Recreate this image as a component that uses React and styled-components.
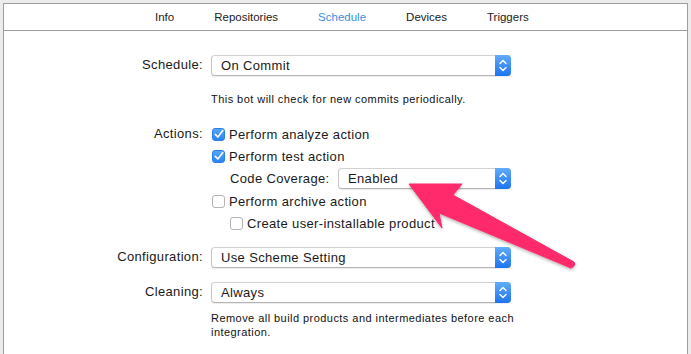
import React from 'react'
import styled, { createGlobalStyle } from 'styled-components'

const GlobalStyle = createGlobalStyle`
    html, body {
        margin: 0;
        padding: 0;
        background: #ececec;
        font-family: "Liberation Sans", Arial, sans-serif;
        color: #1a1a1a;
    }
`

const tabs = ['Info', 'Repositories', 'Schedule', 'Devices', 'Triggers']

const Chevrons = () => (
    <svg width="16" height="19" viewBox="0 0 16 19">
        <path d="M5 7.5 L8 4.5 L11 7.5" fill="none" stroke="#fff" strokeWidth="1.4" strokeLinecap="round" strokeLinejoin="round" />
        <path d="M5 11.5 L8 14.5 L11 11.5" fill="none" stroke="#fff" strokeWidth="1.4" strokeLinecap="round" strokeLinejoin="round" />
    </svg>
)

const Check = () => (
    <svg width="14" height="14" viewBox="0 0 14 14">
        <path d="M3.3 7.4 L5.9 10 L10.8 3.6" fill="none" stroke="#fff" strokeWidth="1.6" strokeLinecap="round" strokeLinejoin="round" />
    </svg>
)

const PopUp = ({ value }) => (
    <Popup>
        <PopupText>{value}</PopupText>
        <Stepper><Chevrons /></Stepper>
    </Popup>
)

const CheckItem = ({ checked, indent, children }) => (
    <CheckRow $indent={indent}>
        <Box $checked={checked}>{checked && <Check />}</Box>
        <span>{children}</span>
    </CheckRow>
)

const Arrow = () => (
    <Overlay width="691" height="354" viewBox="0 0 691 354">
        <defs>
            <filter id="sh" x="-20%" y="-20%" width="140%" height="140%">
                <feDropShadow dx="0" dy="1.5" stdDeviation="1.5" floodColor="#000" floodOpacity="0.3" />
            </filter>
        </defs>
        <path
            d="M409 184 L462 184 L453 195 L574 262 Q576 266 571 268 L439 213 L442 228 Z"
            fill="#fe2c6c"
            stroke="#fe2c6c"
            strokeWidth="1"
            strokeLinejoin="round"
            filter="url(#sh)"
        />
    </Overlay>
)

const App = () => {
    return (
        <Page>
            <GlobalStyle />
            <Panel>
                <TabBar>
                    {tabs.map(t => (
                        <Tab key={t} $active={t === 'Schedule'}>{t}</Tab>
                    ))}
                </TabBar>
                <Form>
                    <Row $top={23}>
                        <Label>Schedule:</Label>
                        <PopUp value="On Commit" />
                    </Row>
                    <Row $top={16}>
                        <span />
                        <Note>This bot will check for new commits periodically.</Note>
                    </Row>
                    <Row $top={17} $align="start">
                        <Label>Actions:</Label>
                        <Checks>
                            <CheckItem checked>Perform analyze action</CheckItem>
                            <CheckItem checked>Perform test action</CheckItem>
                            <SubRow>
                                <SubLabel>Code Coverage:</SubLabel>
                                <PopUp value="Enabled" />
                            </SubRow>
                            <CheckItem>Perform archive action</CheckItem>
                            <CheckItem indent>Create user-installable product</CheckItem>
                        </Checks>
                    </Row>
                    <Row $top={12}>
                        <Label>Configuration:</Label>
                        <PopUp value="Use Scheme Setting" />
                    </Row>
                    <Row $top={13}>
                        <Label>Cleaning:</Label>
                        <PopUp value="Always" />
                    </Row>
                    <Row $top={8}>
                        <span />
                        <Note>Remove all build products and intermediates before each integration.</Note>
                    </Row>
                </Form>
            </Panel>
            <Arrow />
        </Page>
    )
}

export default App

const Page = styled.div`
    position: relative;
    width: 691px;
    height: 354px;
    overflow: hidden;
    padding-top: 3px;
    box-sizing: border-box;
`

const Panel = styled.div`
    margin: 0 3px 0 3px;
    height: 360px;
    background: #ffffff;
    border: 1px solid #9d9d9d;
`

const TabBar = styled.div`
    display: flex;
    align-items: center;
    height: 26px;
    padding-left: 151px;
    gap: 40px;
    border-bottom: 1px solid #9d9d9d;
`

const Tab = styled.div`
    font-size: 11.5px;
    color: ${p => (p.$active ? '#3e8ee2' : '#1c1c1c')};
`

const Form = styled.div`
    display: flex;
    flex-direction: column;
`

const Row = styled.div`
    display: grid;
    grid-template-columns: 199px 300px;
    column-gap: 8px;
    align-items: ${p => p.$align || 'center'};
    margin-top: ${p => p.$top}px;
`

const Label = styled.div`
    font-size: 13px;
    letter-spacing: 0.35px;
    text-align: right;
    line-height: 22px;
`

const Note = styled.div`
    font-size: 11px;
    letter-spacing: 0.45px;
    line-height: 14px;
    color: #111;
    width: 320px;
`

const Popup = styled.div`
    display: flex;
    align-items: stretch;
    height: 19px;
    background: #ffffff;
    border: 1px solid #c6c6c6;
    border-top-color: #d2d2d2;
    border-bottom-color: #b4b4b4;
    border-radius: 4px;
    box-shadow: 0 0.5px 1px rgba(0, 0, 0, 0.08);
    flex: 1;
`

const PopupText = styled.div`
    flex: 1;
    font-size: 13px;
    letter-spacing: 0.35px;
    line-height: 19px;
    padding-left: 9px;
    color: #1a1a1a;
`

const Stepper = styled.div`
    width: 16px;
    margin: -1px -1px -1px 0;
    border-radius: 0 4px 4px 0;
    background: linear-gradient(#62acfb, #1d74ee);
    display: flex;
    align-items: center;
    justify-content: center;
`

const Checks = styled.div`
    display: flex;
    flex-direction: column;
`

const CheckRow = styled.div`
    display: flex;
    align-items: center;
    height: 22.3px;
    font-size: 13px;
    letter-spacing: 0.35px;
    padding-left: ${p => (p.$indent ? 19 : 1)}px;
`

const Box = styled.div`
    width: 13px;
    height: 13px;
    margin-right: 4px;
    border-radius: 3px;
    box-sizing: border-box;
    display: flex;
    align-items: center;
    justify-content: center;
    background: ${p => (p.$checked ? 'linear-gradient(#56a4fa, #2d83f3)' : '#ffffff')};
    border: 1px solid ${p => (p.$checked ? '#2d7fe8' : '#b3b3b3')};
    svg {
        flex: none;
    }
`

const SubRow = styled.div`
    display: flex;
    align-items: center;
    height: 22.3px;
    padding-left: 19px;
`

const SubLabel = styled.div`
    width: 108px;
    font-size: 13px;
    letter-spacing: 0.35px;
`

const Overlay = styled.svg`
    position: absolute;
    top: 0;
    left: 0;
    pointer-events: none;
`
